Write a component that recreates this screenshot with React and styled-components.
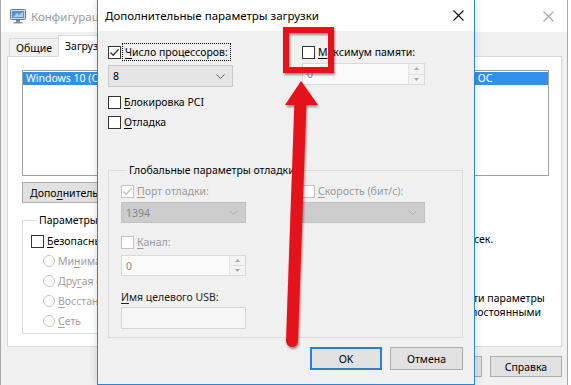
import React from "react";
import styled, { createGlobalStyle } from "styled-components";

const Global = createGlobalStyle`
  html, body { margin: 0; padding: 0; background: #fff; }
  body {
    font-family: "Noto Sans", "Segoe UI", sans-serif;
    font-size: 10.5px;
    color: #000;
  }
`;

const Screen = styled.div`
  position: relative;
  width: 571px;
  height: 385px;
  overflow: hidden;
  background: #fff;
`;

/* ---------- shared win10 controls ---------- */

const U = styled.span`
  text-decoration: underline;
  text-underline-offset: 2px;
`;

const CheckRow = styled.div`
  display: flex;
  align-items: center;
  gap: 3px;
  height: 16px;
  white-space: nowrap;
  color: ${(p) => (p.$disabled ? "#9a9a9a" : "#000")};
  margin-top: ${(p) => p.$mt || 0}px;
`;

const Box = styled.span`
  flex: none;
  width: 13px;
  height: 13px;
  box-sizing: border-box;
  border: 1px solid ${(p) => (p.$disabled ? "#c4c4c4" : "#333")};
  background: #fff;
  display: flex;
  align-items: center;
  justify-content: center;
`;

const FocusLabel = styled.span`
  outline: 1px dotted #000;
  outline-offset: 1px;
  padding: 0 1px;
`;

const Radio = styled.span`
  flex: none;
  width: 12px;
  height: 12px;
  box-sizing: border-box;
  border: 1px solid #c4c4c4;
  border-radius: 50%;
  background: #fff;
`;

const Check = ({ checked, disabled }) => (
  <Box $disabled={disabled}>
    {checked && (
      <svg width="11" height="11" viewBox="0 0 11 11">
        <path
          d="M1.5 5.5 L4.2 8.3 L9.6 2.2"
          fill="none"
          stroke={disabled ? "#c0c0c0" : "#333"}
          strokeWidth="1.3"
        />
      </svg>
    )}
  </Box>
);

const Select = styled.div`
  box-sizing: border-box;
  width: ${(p) => p.$w}px;
  height: ${(p) => p.$h || 22}px;
  margin-top: ${(p) => p.$mt || 0}px;
  display: flex;
  align-items: center;
  justify-content: space-between;
  padding: 0 7px 0 4px;
  background: ${(p) => (p.$disabled ? "#cccccc" : "#e5e5e5")};
  border: 1px solid ${(p) => (p.$disabled ? "#c2c2c2" : "#c9c9c9")};
  color: ${(p) => (p.$disabled ? "#868686" : "#000")};
`;

const Chevron = ({ disabled }) => (
  <svg width="9" height="5" viewBox="0 0 9 5">
    <path
      d="M0.5 0.5 L4.5 4.5 L8.5 0.5"
      fill="none"
      stroke={disabled ? "#b0b0b0" : "#606060"}
      strokeWidth="1"
    />
  </svg>
);

const Spin = styled.div`
  box-sizing: border-box;
  width: ${(p) => p.$w}px;
  height: ${(p) => p.$h || 22}px;
  margin-top: ${(p) => p.$mt || 0}px;
  display: flex;
  background: #fafafa;
  border: 1px solid #d9d9d9;
  color: #8a8a8a;
`;

const SpinText = styled.span`
  flex: 1;
  padding-left: 4px;
  display: flex;
  align-items: center;
`;

const SpinButtons = styled.div`
  width: 15px;
  display: flex;
  flex-direction: column;
  border-left: 1px solid #e2e2e2;
`;

const SpinHalf = styled.div`
  flex: 1;
  display: flex;
  align-items: center;
  justify-content: center;
  background: #f3f3f3;
  border-top: ${(p) => (p.$down ? "1px solid #e2e2e2" : "none")};
`;

const Arrow = ({ down }) => (
  <svg width="5" height="3" viewBox="0 0 5 3">
    <path d={down ? "M0 0 H5 L2.5 3 Z" : "M0 3 H5 L2.5 0 Z"} fill="#a8a8a8" />
  </svg>
);

const SpinBox = ({ w, h, mt, value }) => (
  <Spin $w={w} $h={h} $mt={mt}>
    <SpinText>{value}</SpinText>
    <SpinButtons>
      <SpinHalf>
        <Arrow />
      </SpinHalf>
      <SpinHalf $down>
        <Arrow down />
      </SpinHalf>
    </SpinButtons>
  </Spin>
);

const TextField = styled.div`
  box-sizing: border-box;
  width: ${(p) => p.$w}px;
  height: 22px;
  margin-top: ${(p) => p.$mt || 0}px;
  background: #f6f6f6;
  border: 1px solid #d4d4d4;
`;

const Button = styled.div`
  box-sizing: border-box;
  width: ${(p) => p.$w || 72}px;
  height: ${(p) => p.$h || 21}px;
  padding: 0 7px;
  display: flex;
  align-items: center;
  justify-content: ${(p) => (p.$left ? "flex-start" : "center")};
  white-space: nowrap;
  background: #e1e1e1;
  border: ${(p) => (p.$default ? "2px solid #2d7fd0" : "1px solid #adadad")};
  color: #000;
`;

const Group = styled.fieldset`
  margin: ${(p) => p.$mt || 0}px 0 0 0;
  min-width: 0;
  padding: ${(p) => p.$pad};
  border: 1px solid #dcdcdc;
  width: ${(p) => (p.$w ? `${p.$w}px` : "auto")};
  box-sizing: border-box;
`;

const Legend = styled.legend`
  margin-left: 6px;
  padding: 0 2px;
  line-height: 16px;
  color: #000;
`;

const CloseX = ({ color }) => (
  <svg width="11" height="11" viewBox="0 0 11 11">
    <path d="M0.5 0.5 L10.5 10.5 M10.5 0.5 L0.5 10.5" stroke={color} strokeWidth="1.1" />
  </svg>
);

/* ---------- background window: msconfig ---------- */

const Window = styled.div`
  width: 568px;
  height: 385px;
  box-sizing: border-box;
  border-left: 1px solid #a9a9a9;
  border-right: 1px solid #a9a9a9;
  background: #f0f0f0;
  display: flex;
  flex-direction: column;
`;

const TitleBar = styled.div`
  flex: none;
  height: ${(p) => p.$h}px;
  background: #fff;
  display: flex;
  align-items: center;
  gap: 5px;
  padding: ${(p) => p.$pad};
`;

const Title = styled.span`
  flex: 1;
  font-size: 11.5px;
  white-space: nowrap;
  color: ${(p) => (p.$inactive ? "#9a9a9a" : "#000")};
`;

const WinBody = styled.div`
  padding: 4px 5px 0 6px;
  display: flex;
  flex-direction: column;
`;

const Tabs = styled.div`
  display: flex;
  align-items: flex-end;
  height: 21px;
  padding-left: 2px;
  position: relative;
  z-index: 1;
  margin-bottom: -1px;
`;

const Tab = styled.div`
  box-sizing: border-box;
  height: ${(p) => (p.$active ? 22 : 19)}px;
  padding: 0 6px;
  display: flex;
  align-items: center;
  border: 1px solid #d9d9d9;
  border-bottom: ${(p) => (p.$active ? "1px solid #fff" : "1px solid #d9d9d9")};
  background: ${(p) => (p.$active ? "#fff" : "#f0f0f0")};
  margin-left: ${(p) => (p.$active ? -1 : 0)}px;
  white-space: nowrap;
`;

const Panel = styled.div`
  box-sizing: border-box;
  height: 291px;
  background: #fff;
  border: 1px solid #d9d9d9;
  padding: 13px 12px 0 14px;
  display: flex;
  flex-direction: column;
`;

const ListBox = styled.div`
  box-sizing: border-box;
  height: 106px;
  border: 1px solid #a0a0a0;
  padding: 1px 0;
`;

const ListItem = styled.div`
  height: 13px;
  line-height: 13px;
  padding-left: 3px;
  background: #3390ea;
  color: #fff;
  white-space: nowrap;
  overflow: hidden;
`;

const ButtonRow = styled.div`
  display: flex;
  gap: 8px;
  margin-top: ${(p) => p.$mt}px;
  justify-content: ${(p) => (p.$end ? "flex-end" : "flex-start")};
`;

const LowerArea = styled.div`
  display: flex;
  margin-top: 9px;
`;

const OptionCol = styled.div`
  display: flex;
  flex-direction: column;
`;

const RadioRow = styled.div`
  display: flex;
  align-items: center;
  gap: 3px;
  height: 16px;
  margin: 4px 0 0 12px;
  color: #a0a0a0;
  white-space: nowrap;
`;

const SideCol = styled.div`
  margin-left: auto;
  width: 150px;
  display: flex;
  flex-direction: column;
`;

const TimeoutLabel = styled.div`
  height: 16px;
  line-height: 16px;
`;

const TimeoutRow = styled.div`
  display: flex;
  align-items: center;
  gap: 10px;
  margin-top: 1px;
`;

const TimeoutInput = styled.div`
  box-sizing: border-box;
  width: 65px;
  height: 20px;
  border: 1px solid #a0a0a0;
  padding-left: 4px;
  display: flex;
  align-items: center;
`;

const PermRow = styled.div`
  display: flex;
  gap: 3px;
  margin: 42px 0 0 9px;
  line-height: 14px;
`;

const MsIcon = () => (
  <svg width="16" height="16" viewBox="0 0 16 16">
    <rect x="0.5" y="1.5" width="15" height="10" rx="1" fill="#d5dbe3" stroke="#6a7686" />
    <rect x="2" y="3" width="12" height="7" fill="#5b8fc9" />
    <path d="M3 9 L7 5 L9 7 L13 3.5 V9 Z" fill="#a9cbef" />
    <rect x="6" y="12" width="4" height="2" fill="#7b8796" />
    <rect x="3.5" y="14" width="9" height="1.5" fill="#8b96a4" />
  </svg>
);

/* ---------- foreground dialog ---------- */

const Dialog = styled.div`
  position: absolute;
  z-index: 2;
  left: 97px;
  top: -1px;
  width: 378px;
  height: 386px;
  box-sizing: border-box;
  border: 1px solid #2b86d6;
  background: #f0f0f0;
  display: flex;
  flex-direction: column;
  box-shadow: 0 0 8px rgba(0, 0, 0, 0.15);
`;

const DialogBody = styled.div`
  padding: 13px 11px 0 10px;
  display: flex;
  flex-direction: column;
`;

const TopGrid = styled.div`
  display: grid;
  grid-template-columns: 194px 123px;
  align-items: start;
`;

const Col = styled.div`
  display: flex;
  flex-direction: column;
`;

const DebugGrid = styled.div`
  display: grid;
  grid-template-columns: 181px 123px;
  align-items: start;
`;

const PlainLabel = styled.div`
  height: 16px;
  line-height: 16px;
  margin-top: ${(p) => p.$mt || 0}px;
  color: #222;
  white-space: nowrap;
`;

/* ---------- red annotation ---------- */

const Marks = styled.svg`
  position: absolute;
  z-index: 3;
  left: 0;
  top: 0;
  pointer-events: none;
  filter: drop-shadow(1px 2px 1px rgba(80, 0, 0, 0.45));
`;

export default function App() {
  return (
    <Screen>
      <Global />

      <Window>
        <TitleBar $h={32} $pad="0 13px 0 9px">
          <MsIcon />
          <Title $inactive>Конфигурация системы</Title>
          <CloseX color="#a8a8a8" />
        </TitleBar>
        <WinBody>
          <Tabs>
            <Tab>Общие</Tab>
            <Tab $active>Загрузка</Tab>
            <Tab>Службы</Tab>
            <Tab>Автозагрузка</Tab>
            <Tab>Сервис</Tab>
          </Tabs>
          <Panel>
            <ListBox>
              <ListItem>
                Windows 10 (C:\Windows) : Текущая операционная система; загружаемая по умолчанию ОС
              </ListItem>
            </ListBox>
            <ButtonRow $mt={6}>
              <Button $w={180} $left>
                Допо<U>л</U>нительные параметры...
              </Button>
            </ButtonRow>
            <LowerArea>
              <Group $w={300} $pad="5px 8px 4px 8px">
                <Legend>Параметры загрузки</Legend>
                <OptionCol>
                  <CheckRow>
                    <Check />
                    <span>
                      <U>Б</U>езопасный режим
                    </span>
                  </CheckRow>
                  <RadioRow>
                    <Radio />
                    <span>
                      Ми<U>н</U>имальная
                    </span>
                  </RadioRow>
                  <RadioRow>
                    <Radio />
                    <span>
                      Дру<U>г</U>ая оболочка
                    </span>
                  </RadioRow>
                  <RadioRow>
                    <Radio />
                    <span>
                      <U>В</U>осстановление
                    </span>
                  </RadioRow>
                  <RadioRow>
                    <Radio />
                    <span>
                      <U>С</U>еть
                    </span>
                  </RadioRow>
                </OptionCol>
              </Group>
              <SideCol>
                <TimeoutLabel>Таймаут:</TimeoutLabel>
                <TimeoutRow>
                  <TimeoutInput>30</TimeoutInput>
                  <span>сек.</span>
                </TimeoutRow>
                <PermRow>
                  <Check />
                  <span>
                    Сделать эти параметры
                    <br />
                    загрузки постоянными
                  </span>
                </PermRow>
              </SideCol>
            </LowerArea>
          </Panel>
          <ButtonRow $mt={9} $end>
            <Button>ОК</Button>
            <Button>Отмена</Button>
            <Button>Применить</Button>
            <Button>Справка</Button>
          </ButtonRow>
        </WinBody>
      </Window>

      <Dialog>
        <TitleBar $h={31} $pad="0 10px 0 7px">
          <Title>Дополнительные параметры загрузки</Title>
          <CloseX color="#111" />
        </TitleBar>
        <DialogBody>
          <TopGrid>
            <Col>
              <CheckRow>
                <Check checked />
                <FocusLabel>
                  <U>Ч</U>исло процессоров:
                </FocusLabel>
              </CheckRow>
              <Select $w={125} $mt={5}>
                <span>8</span>
                <Chevron />
              </Select>
              <CheckRow $mt={7}>
                <Check />
                <span>
                  <U>Б</U>локировка PCI
                </span>
              </CheckRow>
              <CheckRow $mt={4}>
                <Check />
                <span>
                  <U>О</U>тладка
                </span>
              </CheckRow>
            </Col>
            <Col>
              <CheckRow>
                <Check />
                <span>
                  <U>М</U>аксимум памяти:
                </span>
              </CheckRow>
              <SpinBox w={123} mt={3} value="0" />
            </Col>
          </TopGrid>

          <Group $mt={32} $pad="5px 12px 8px 12px">
            <Legend>Глобальные параметры отладки</Legend>
            <DebugGrid>
              <Col>
                <CheckRow $disabled>
                  <Check checked disabled />
                  <span>
                    <U>П</U>орт отладки:
                  </span>
                </CheckRow>
                <Select $w={125} $h={21} $mt={3} $disabled>
                  <span>1394</span>
                  <Chevron disabled />
                </Select>
                <CheckRow $disabled $mt={11}>
                  <Check disabled />
                  <span>
                    <U>К</U>анал:
                  </span>
                </CheckRow>
                <SpinBox w={125} h={21} mt={5} value="0" />
                <PlainLabel $mt={13}>
                  <U>И</U>мя целевого USB:
                </PlainLabel>
                <TextField $w={125} $mt={2} />
              </Col>
              <Col>
                <CheckRow $disabled>
                  <Check disabled />
                  <span>
                    <U>С</U>корость (бит/с):
                  </span>
                </CheckRow>
                <Select $w={123} $h={21} $mt={3} $disabled>
                  <span />
                  <Chevron disabled />
                </Select>
              </Col>
            </DebugGrid>
          </Group>

          <ButtonRow $mt={9} $end>
            <Button $w={72} $h={23} $default>
              OK
            </Button>
            <Button $w={73} $h={23}>
              Отмена
            </Button>
          </ButtonRow>
        </DialogBody>
      </Dialog>

      <Marks width="571" height="385" viewBox="0 0 571 385">
        <rect x="286" y="30" width="45" height="40" fill="none" stroke="#e3121b" strokeWidth="6" />
        <path d="M292 341 L300.5 100" stroke="#e3121b" strokeWidth="12" strokeLinecap="round" />
        <path d="M301 81 L285 105 L318 105 Z" fill="#e3121b" />
      </Marks>
    </Screen>
  );
}
